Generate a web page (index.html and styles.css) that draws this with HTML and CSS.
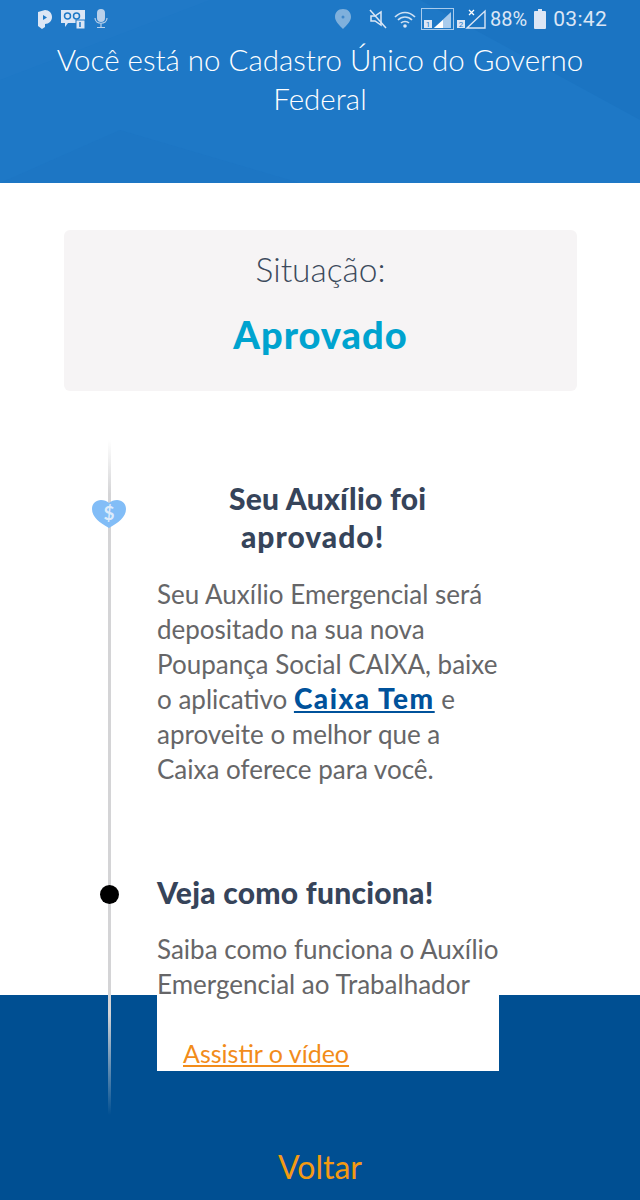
FILE: index.html
```html
<!DOCTYPE html>
<html lang="pt-BR">
<head>
    <meta charset="UTF-8">
    <meta name="viewport" content="width=device-width, initial-scale=1.0">
    <title>Auxílio Emergencial</title>
    <link rel="stylesheet" href="styles.css">
</head>
<body>
    <header class="top">
        <svg class="facets" viewBox="0 0 640 183" aria-hidden="true">
            <polygon points="0,0 210,0 0,80" fill="#2079c7"/>
            <polygon points="420,0 640,0 640,120" fill="#1b74c2"/>
            <polygon points="0,183 120,130 300,183" fill="#1d76c4"/>
        </svg>
        <div class="status">
            <div class="status-left">
                <svg width="16" height="20" viewBox="0 0 16 20"><path d="M1 3 8 1c4 0 7 3 7 7s-3 7-7 7v3l-3 2-4-3z" fill="#dce6f5"/><path d="M6 6l4 2.500-4 2.500z" fill="#1e78c6"/></svg>
                <svg width="24" height="20" viewBox="0 0 24 20"><path d="M0 1h24v19h-8v-6H7l-3 4v-4H0z" fill="#dce6f5"/><circle cx="6.500" cy="7" r="3" fill="none" stroke="#1e78c6" stroke-width="1.500"/><circle cx="15.500" cy="7" r="3" fill="none" stroke="#1e78c6" stroke-width="1.500"/><rect x="15" y="11" width="9" height="9" fill="#dce6f5" stroke="#1e78c6"/><path d="M19 13v5" stroke="#1e78c6" stroke-width="1.500"/></svg>
                <svg width="16" height="20" viewBox="0 0 16 20"><rect x="4" y="0" width="8" height="13" rx="4" fill="#b9d0ea"/><path d="M2 9c0 7 12 7 12 0M8 14v4M4 18.500h8" fill="none" stroke="#b9d0ea" stroke-width="1.200"/></svg>
            </div>
            <div class="status-right">
                <svg class="pin" width="18" height="22" viewBox="0 0 18 22"><path d="M9 1c-5 0-8 3.500-8 8 0 4.500 5 9 8 12 3-3 8-7.500 8-12 0-4.500-3-8-8-8z" fill="#7fb0dc"/><circle cx="9" cy="9" r="1.500" fill="#3f86c8"/></svg>
                <svg class="mute" width="20" height="20" viewBox="0 0 20 20"><path d="M3 7h4l6-4v13l-6-4H3z" fill="none" stroke="#dce6f5" stroke-width="1.500"/><path d="M2 1l16 18" stroke="#dce6f5" stroke-width="1.500"/></svg>
                <svg width="24" height="20" viewBox="0 0 24 20"><path d="M1 8c6-6 14-6 20 0M4 11c4-4 10-4 14 0M7 14c2-2 6-2 8 0" fill="none" stroke="#cfe0f2" stroke-width="1.700"/><circle cx="11" cy="17" r="1.800" fill="#dce6f5"/></svg>
                <svg width="33" height="22" viewBox="0 0 33 22"><rect x=".5" y=".5" width="32" height="21" fill="none" stroke="#a9cbec"/><rect x="3" y="12" width="8" height="8" fill="#dce6f5"/><text x="7" y="19" text-anchor="middle" class="sim-num">1</text><path d="M13 20 30 4v16z" fill="#a9cbec"/><path d="M13 20l9-8v8z" fill="#fff"/></svg>
                <svg width="30" height="22" viewBox="0 0 30 22"><rect x="0" y="12" width="8" height="8" fill="#dce6f5"/><text x="4" y="19" text-anchor="middle" class="sim-num">2</text><path d="M12 2l5 5M17 2l-5 5" stroke="#fff" stroke-width="1.300"/><path d="M10 20 28 3v17z" fill="none" stroke="#dce6f5" stroke-width="1.400"/></svg>
                <span class="pct">88%</span>
                <svg class="battery" width="12" height="20" viewBox="0 0 12 20"><path d="M4 0h4v2h3a1 1 0 0 1 1 1v16a1 1 0 0 1-1 1H1a1 1 0 0 1-1-1V3a1 1 0 0 1 1-1h3z" fill="#dce6f5"/></svg>
                <span class="clock">03:42</span>
            </div>
        </div>
        <h1 class="title">Você está no Cadastro Único do Governo Federal</h1>
    </header>

    <main class="content">
        <section class="card">
            <p class="card-label">Situação:</p>
            <p class="card-value">Aprovado</p>
        </section>

        <div class="timeline">
            <article class="step step-first">
                <svg class="heart" width="34" height="28" viewBox="0 0 34 28"><path d="M17 28C8 23 0 17 0 9 0 3.500 4 0 9 0c3 0 6 1 8 3 2-2 5-3 8-3 5 0 9 3.500 9 9 0 8-8 14-17 19z" fill="#82bdf7"/><text x="17" y="20" text-anchor="middle" class="heart-sign">$</text></svg>
                <h2 class="step-title"><span class="title-line-one">Seu Auxílio foi</span><span class="title-line-two">aprovado!</span></h2>
                <p class="step-text">Seu Auxílio Emergencial será depositado na sua nova Poupança Social CAIXA, baixe o aplicativo <a class="link-app" href="#">Caixa Tem</a> e aproveite o melhor que a Caixa oferece para você.</p>
            </article>
            <article class="step step-second">
                <span class="dot"></span>
                <h2 class="step-title">Veja como funciona!</h2>
                <p class="step-text">Saiba como funciona o Auxílio Emergencial ao Trabalhador</p>
                <a class="link-video" href="#">Assistir o vídeo</a>
            </article>
        </div>
    </main>

    <footer class="bottom">
        <a class="back" href="#">Voltar</a>
    </footer>
</body>
</html>
```

FILE: styles.css
```css
* {
    box-sizing: border-box;
}

body {
    margin: 0;
    width: 640px;
    height: 1200px;
    overflow: hidden;
    background: #fff;
    font-family: "Lato", "Liberation Sans", sans-serif;
}

p, h1, h2 {
    margin: 0;
}

a {
    text-decoration: none;
}

/* header */
.top {
    position: relative;
    height: 183px;
    background: #1e78c6;
    color: #fff;
}

.facets {
    position: absolute;
    left: 0;
    top: 0;
    width: 640px;
    height: 183px;
}

.status {
    position: relative;
    height: 40px;
    padding: 8px 33px 0 37px;
    display: flex;
    justify-content: space-between;
    align-items: flex-start;
}

.status-left, .status-right {
    display: flex;
    align-items: center;
    height: 22px;
}

.status-left {
    gap: 8px;
}

.status-right {
    gap: 3px;
    color: #dce6f5;
    font-family: "Roboto", sans-serif;
    font-size: 21px;
}

.pin {
    margin-right: 13px;
}

.mute {
    margin-right: 3px;
}

.pct {
    font-size: 20px;
}

.battery {
    margin: 0 4px;
}

.clock {
    letter-spacing: 0.3px;
}

.sim-num {
    font-size: 8px;
    fill: #1e78c6;
    font-family: "Roboto", sans-serif;
}

.title {
    position: relative;
    width: 560px;
    margin: 0 auto;
    text-align: center;
    font-size: 29.500px;
    line-height: 39px;
    font-weight: 300;
}

/* situation card */
.content {
    height: 812px;
    padding-top: 47px;
}

.card {
    width: 513px;
    height: 161px;
    margin-left: 64px;
    padding-top: 17px;
    background: #f6f4f5;
    border-radius: 6px;
    text-align: center;
}

.card-label {
    font-size: 33.500px;
    line-height: 44px;
    font-weight: 300;
    color: #3c4a5c;
}

.card-value {
    margin-top: 21px;
    font-size: 38px;
    line-height: 44px;
    font-weight: 900;
    letter-spacing: 1px;
    color: #00a3cf;
}

/* timeline */
.timeline {
    position: relative;
    margin-top: 49px;
    height: 675px;
}

.timeline::before {
    content: "";
    position: absolute;
    left: 108px;
    top: 0;
    bottom: 0;
    width: 3px;
    background: linear-gradient(to bottom, rgba(212, 212, 214, 0), #d4d4d6 8%, #d4d4d6 85%, rgba(212, 212, 214, 0));
}

.step {
    position: relative;
    width: 342px;
    margin-left: 157px;
    background: #fff;
    z-index: 1;
}

.step-first {
    height: 310px;
    padding-top: 39px;
}

.step-second {
    height: 198px;
    margin-top: 123px;
}

.heart {
    position: absolute;
    left: -65px;
    top: 60px;
}

.heart-sign {
    font-size: 19px;
    font-weight: 700;
    fill: #dcebfb;
    font-family: "Lato", sans-serif;
}

.dot {
    position: absolute;
    left: -57px;
    top: 12px;
    width: 19px;
    height: 19px;
    border-radius: 50%;
    background: #000;
}

.step-title {
    font-size: 30px;
    line-height: 38px;
    font-weight: 900;
    letter-spacing: 0.25px;
    color: #36445a;
}

.title-line-one, .title-line-two {
    display: block;
}

.title-line-one {
    margin-left: 72px;
}

.title-line-two {
    margin-left: 84px;
    letter-spacing: 1px;
}

.step-text {
    margin-top: 22px;
    font-size: 26px;
    line-height: 35px;
    color: #666668;
}

.step-second .step-text {
    margin-top: 21px;
}

.link-app {
    color: #00529b;
    font-size: 28px;
    line-height: 1;
    font-weight: 900;
    letter-spacing: 1.500px;
    text-decoration: underline;
}

.link-video {
    display: inline-block;
    margin: 34px 0 0 26px;
    font-size: 25px;
    line-height: 35px;
    color: #f28c1a;
    text-decoration: underline;
}

/* footer */
.bottom {
    height: 205px;
    padding-top: 152px;
    background: #004f92;
    text-align: center;
}

.back {
    font-size: 32px;
    line-height: 40px;
    color: #f39a12;
}
```
